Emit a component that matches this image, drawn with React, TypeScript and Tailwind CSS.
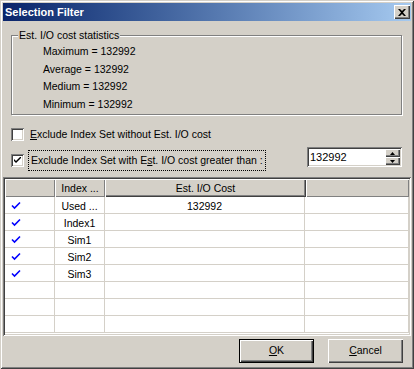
import React from "react";

const raised = "shadow-[inset_1px_1px_#ffffff,inset_-1px_-1px_#404040,inset_-2px_-2px_#808080]";
const sunken = "shadow-[inset_1px_1px_#808080,inset_-1px_-1px_#ffffff,inset_2px_2px_#404040,inset_-2px_-2px_#d4d0c8]";

function Check() {
  return (
    <svg width="10" height="9" viewBox="0 0 10 9">
      <path d="M1 4.5 L3.5 7 L9 1.5" stroke="#0000ff" strokeWidth="1.6" fill="none" />
    </svg>
  );
}

const rows = [
  { name: "Used ...", cost: "132992", checked: true },
  { name: "Index1", cost: "", checked: true },
  { name: "Sim1", cost: "", checked: true },
  { name: "Sim2", cost: "", checked: true },
  { name: "Sim3", cost: "", checked: true },
  { name: "", cost: "", checked: false },
  { name: "", cost: "", checked: false },
  { name: "", cost: "", checked: false },
];

export default function App() {
  return (
    <div
      className="w-[414px] h-[369px] bg-[#d4d0c8] p-[3px] flex flex-col text-[10.5px] text-black shadow-[inset_1px_1px_#d4d0c8,inset_-1px_-1px_#404040,inset_2px_2px_#ffffff,inset_-2px_-2px_#808080]"
      style={{ fontFamily: '"Liberation Sans", Arial, sans-serif' }}
    >
      {/* Title bar */}
      <div className="h-[18px] flex items-center bg-gradient-to-r from-[#0a246a] to-[#a6caf0] pl-[2px] pr-[1px]">
        <span className="text-white font-bold text-[11px] leading-none">Selection Filter</span>
        <div className={`ml-auto w-[16px] h-[14px] bg-[#d4d0c8] flex items-center justify-center ${raised}`}>
          <svg width="8" height="7" viewBox="0 0 8 7">
            <path d="M0 0 H2 L4 2 L6 0 H8 L5 3.5 L8 7 H6 L4 5 L2 7 H0 L3 3.5 Z" fill="#000" />
          </svg>
        </div>
      </div>

      {/* Group box */}
      <div className="relative mt-[14px] ml-[8px] mr-[9px] h-[80px] border border-[#808080] shadow-[inset_1px_1px_#ffffff,1px_1px_#ffffff]">
        <span className="absolute left-[6px] top-[-8px] bg-[#d4d0c8] px-[1px] leading-[14px]">Est. I/O cost statistics</span>
        <div className="pl-[31px] pt-[7px] flex flex-col leading-[17.5px]">
          <span>Maximum = 132992</span>
          <span>Average = 132992</span>
          <span>Medium = 132992</span>
          <span>Minimum = 132992</span>
        </div>
      </div>

      {/* Checkbox 1 */}
      <div className="mt-[13px] ml-[8px] flex items-center h-[13px]">
        <div className={`w-[13px] h-[13px] bg-white ${sunken}`} />
        <span className="ml-[6px] leading-none">
          <span className="underline">E</span>xclude Index Set without Est. I/O cost
        </span>
      </div>

      {/* Checkbox 2 + spinner */}
      <div className="mt-[6px] flex items-start h-[24px]">
        <div className={`ml-[8px] mt-[7px] w-[13px] h-[13px] bg-white flex items-center justify-center ${sunken}`}>
          <svg width="7" height="7" viewBox="0 0 7 7">
            <path d="M0 2 L0 4 L2 6 L7 1 L7 -1 L2 4 Z" fill="#000" />
          </svg>
        </div>
        <div className="ml-[4px] mt-[3px] h-[21px] px-[2px] flex items-center border border-dotted border-black leading-none">
          Exclude Index Set with E<span className="underline">s</span>t. I/O cost greater than :
        </div>
        <div className={`ml-auto mr-[9px] w-[95px] h-[20px] bg-white flex items-center pl-[3px] pr-[2px] ${sunken}`}>
          <span className="text-[11px] leading-none">132992</span>
          <div className="ml-auto flex flex-col">
            <div className={`w-[15px] h-[8px] bg-[#d4d0c8] flex items-center justify-center ${raised}`}>
              <svg width="5" height="3" viewBox="0 0 5 3"><path d="M2.5 0 L5 3 H0 Z" fill="#000" /></svg>
            </div>
            <div className={`w-[15px] h-[8px] bg-[#d4d0c8] flex items-center justify-center ${raised}`}>
              <svg width="5" height="3" viewBox="0 0 5 3"><path d="M0 0 H5 L2.5 3 Z" fill="#000" /></svg>
            </div>
          </div>
        </div>
      </div>

      {/* Grid */}
      <div className={`mt-[6px] h-[159px] p-[2px] bg-white ${sunken}`}>
        <div className="grid grid-cols-[50px_50px_201px_1fr] h-[18px] bg-[#d4d0c8]">
          <div className="shadow-[inset_1px_1px_#ffffff,inset_-1px_-1px_#808080]" />
          <div className="shadow-[inset_1px_1px_#ffffff,inset_-1px_-1px_#808080] flex items-center justify-center leading-none">Index ...</div>
          <div className="shadow-[inset_1px_1px_#ffffff,inset_-1px_-1px_#404040,inset_-2px_-2px_#808080] flex items-center justify-center leading-none">Est. I/O Cost</div>
          <div className="shadow-[inset_1px_1px_#ffffff,inset_-1px_-1px_#808080]" />
        </div>
        {rows.map((r, i) => (
          <div key={i} className="grid grid-cols-[50px_50px_200px_1fr] h-[17px] border-b border-[#d4d0c8]">
            <div className="border-r border-[#d4d0c8] flex items-center pl-[6px]">{r.checked && <Check />}</div>
            <div className="border-r border-[#d4d0c8] flex items-center justify-center leading-none pt-[2px]">{r.name}</div>
            <div className="border-r border-[#d4d0c8] flex items-center justify-center leading-none pt-[2px]">{r.cost}</div>
            <div className="border-r border-[#d4d0c8]" />
          </div>
        ))}
      </div>

      {/* Buttons */}
      <div className="mt-[3px] flex justify-end gap-[14px] mr-[8px]">
        <div className="w-[75px] h-[24px] border border-black">
          <div className={`w-full h-full flex items-center justify-center ${raised}`}>
            <span><span className="underline">O</span>K</span>
          </div>
        </div>
        <div className={`w-[75px] h-[24px] flex items-center justify-center ${raised}`}>
          <span><span className="underline">C</span>ancel</span>
        </div>
      </div>
    </div>
  );
}
